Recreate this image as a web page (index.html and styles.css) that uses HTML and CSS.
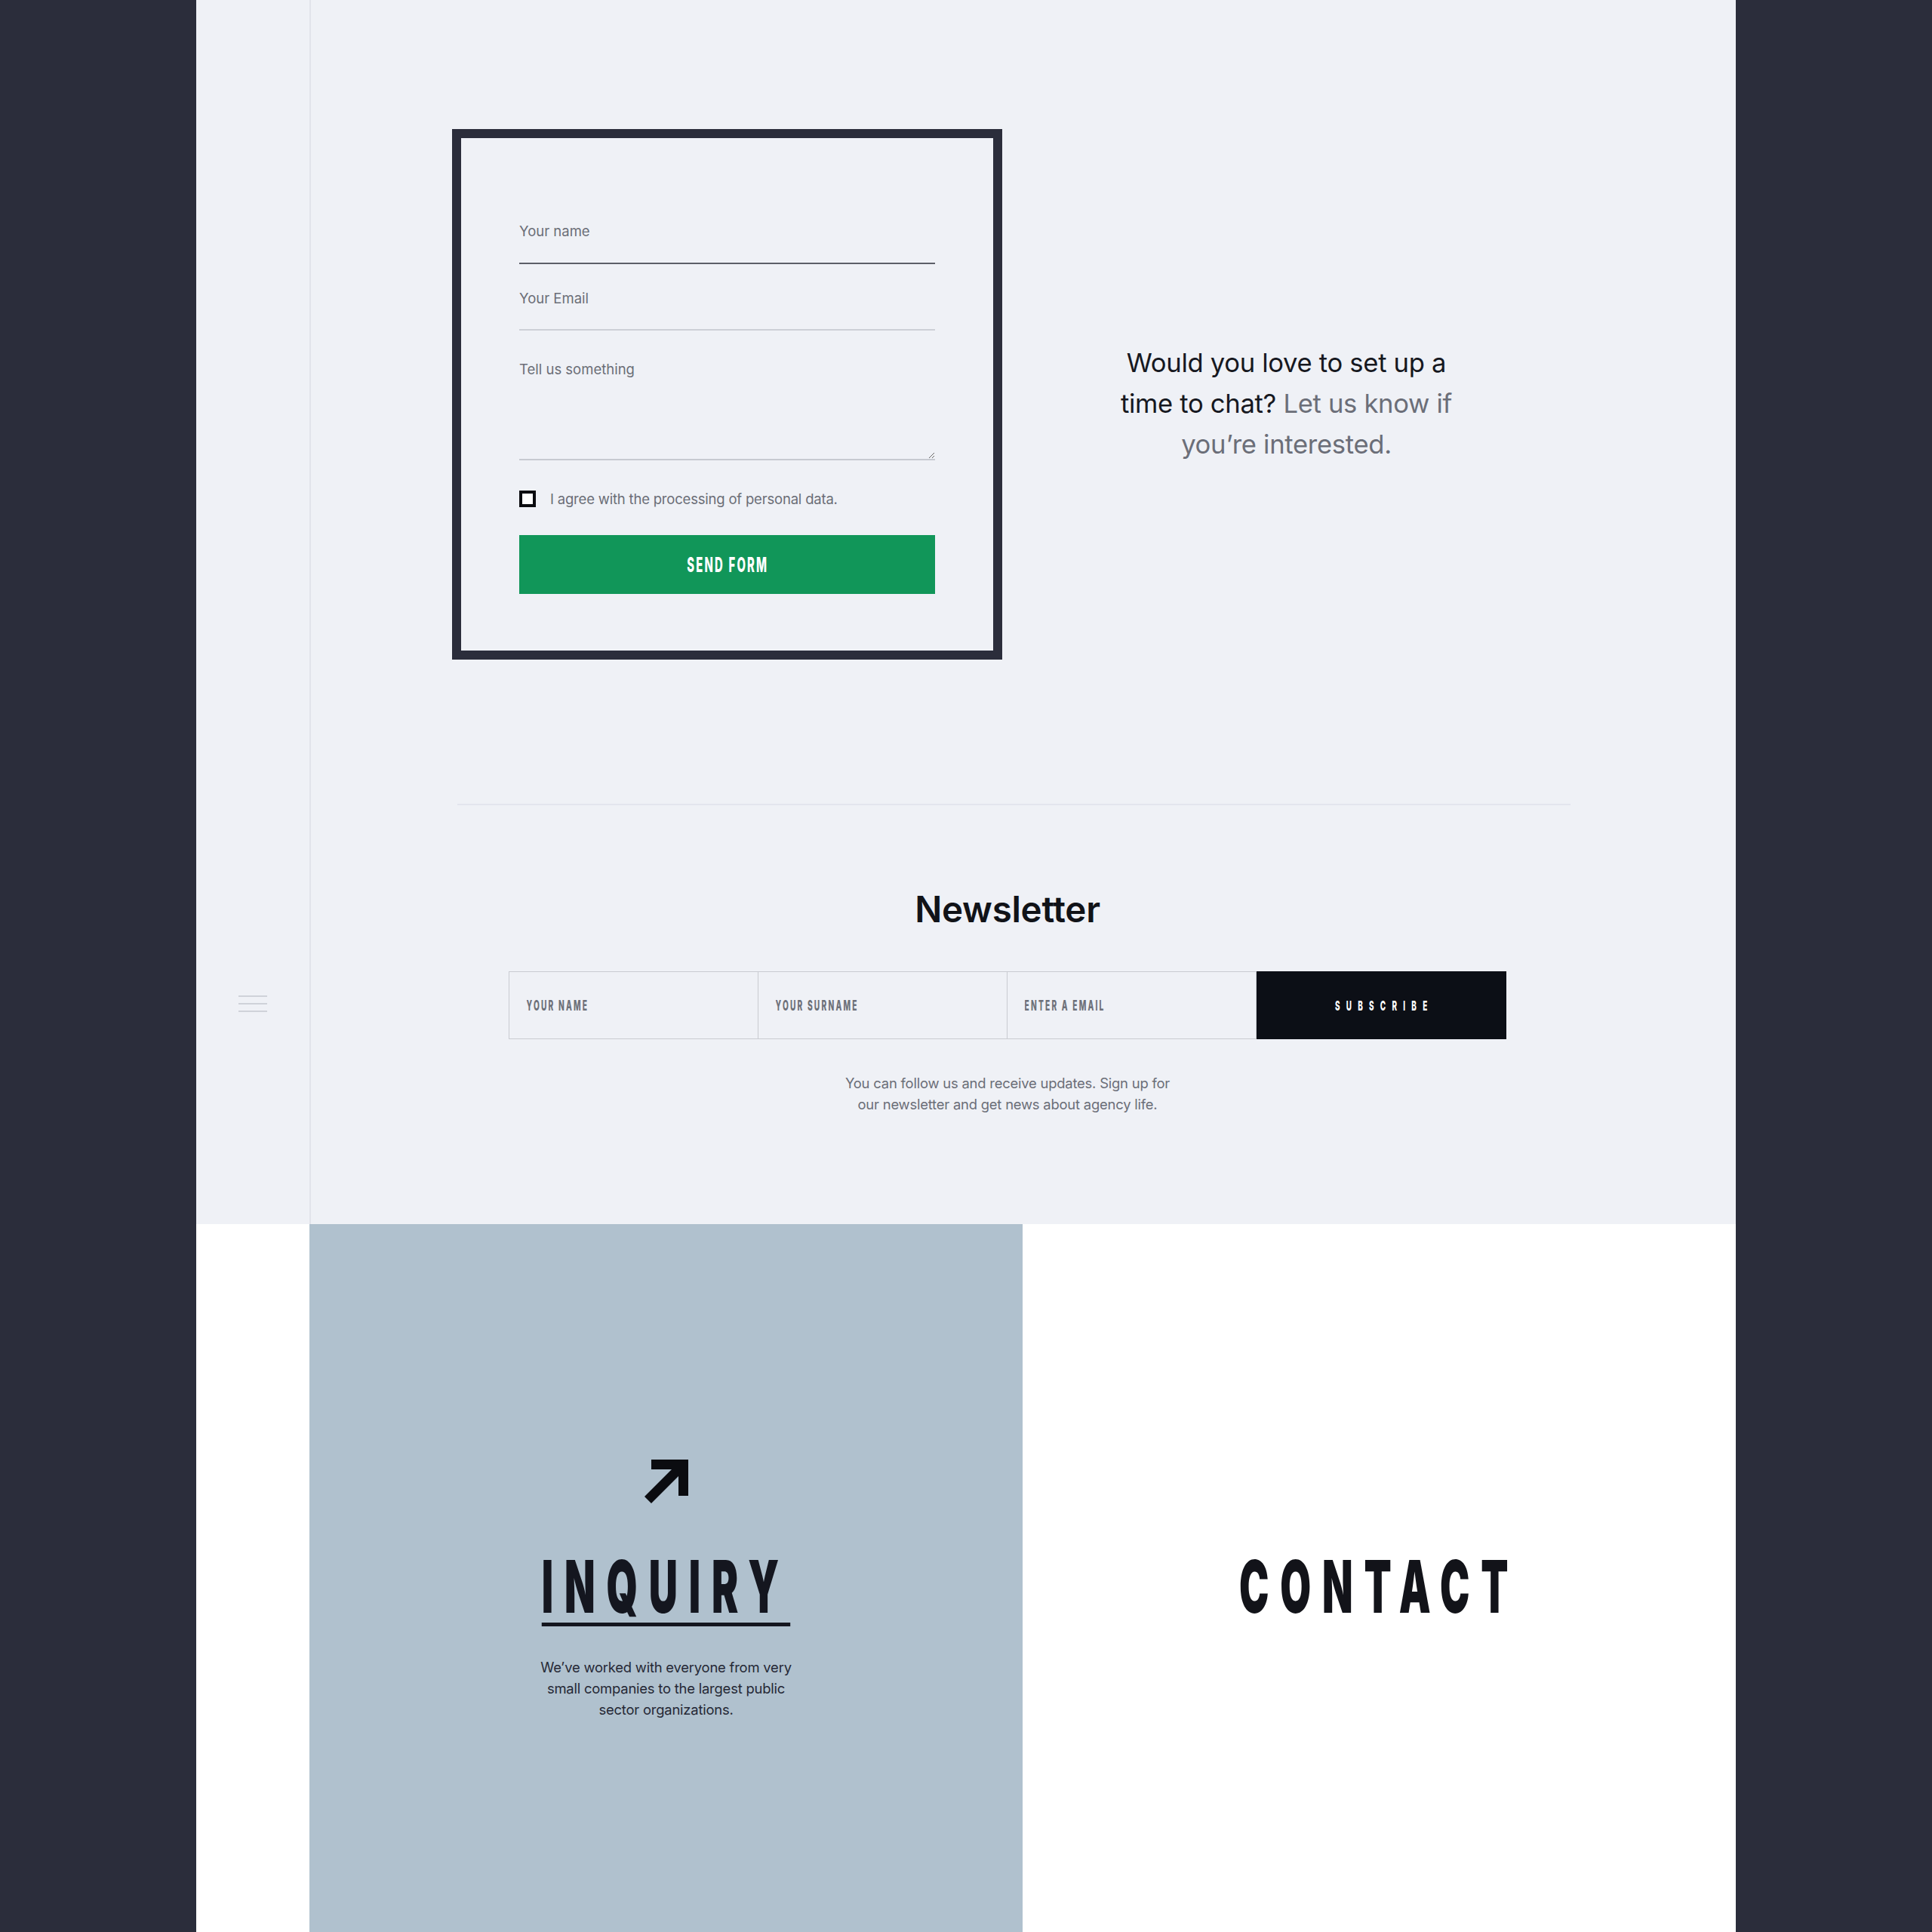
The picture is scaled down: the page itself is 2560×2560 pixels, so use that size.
FILE: index.html
```html
<!DOCTYPE html>
<html lang="en">
<head>
<meta charset="utf-8">
<title>Contact</title>
<link rel="stylesheet" href="styles.css">
</head>
<body>
<div class="page">
  <section class="top">
    <aside class="rail">
      <span class="burger"><i></i><i></i><i></i></span>
    </aside>
    <div class="main">
      <div class="container">
        <div class="contact-row">
          <form class="form-box">
            <input class="field field-active" type="text" placeholder="Your name">
            <input class="field field-2" type="email" placeholder="Your Email">
            <textarea class="area" placeholder="Tell us something"></textarea>
            <label class="agree"><input class="check" type="checkbox"><span>I agree with the processing of personal data.</span></label>
            <button class="send" type="button"><span class="cond send-label">Send Form</span></button>
          </form>
          <div class="pitch">
            <div class="pitch-text">
              <div class="strong">Would you love to set up a</div>
              <div><span class="strong">time to chat?</span> <span class="muted">Let us know if</span></div>
              <div class="muted">you’re interested.</div>
            </div>
          </div>
        </div>
        <hr class="divider">
        <div class="newsletter">
          <h2 class="nl-title">Newsletter</h2>
          <div class="nl-form">
            <div class="nl-cell"><input class="nl-input" type="text" placeholder="Your Name"></div>
            <div class="nl-cell"><input class="nl-input" type="text" placeholder="Your Surname"></div>
            <div class="nl-cell"><input class="nl-input" type="email" placeholder="Enter a Email"></div>
            <button class="nl-btn" type="button"><span class="cond nl-btn-label">Subscribe</span></button>
          </div>
          <p class="nl-note">You can follow us and receive updates. Sign up for<br>our newsletter and get news about agency life.</p>
        </div>
      </div>
    </div>
  </section>
  <section class="bottom">
    <div class="gap-col"></div>
    <div class="panel panel-inquiry">
      <svg class="arrow" viewBox="0 0 58 58" width="58" height="58"><path d="M9 0H58V48H45V22L9 58L0 49L36 13H9Z" fill="#0b0c10"/></svg>
      <h3 class="big big-underline">Inquiry</h3>
      <p class="panel-text">We’ve worked with everyone from very<br>small companies to the largest public<br>sector organizations.</p>
    </div>
    <div class="panel panel-contact">
      <h3 class="big">Contact</h3>
    </div>
  </section>
</div>
</body>
</html>
```
FILE: styles.css
```css
* { box-sizing: border-box; }
html, body { margin: 0; padding: 0; }
body {
  background: #2b2d3b;
  font-family: Inter, "Noto Sans", sans-serif;
  color: #15171f;
}
.page {
  width: 2040px;
  margin: 0 auto;
}
.top {
  display: flex;
  background: #eff1f6;
}
.rail {
  width: 152px;
  flex: none;
  border-right: 2px solid #e2e4eb;
  display: flex;
  justify-content: center;
  align-items: flex-start;
  padding-top: 1319px;
}
.burger {
  display: flex;
  flex-direction: column;
  gap: 8px;
  width: 38px;
}
.burger i {
  display: block;
  height: 2px;
  background: #cfd2d9;
}
.main { flex: 1; }
.container {
  margin-left: 187px;
  width: 1482px;
  padding-top: 171px;
  padding-bottom: 145px;
}
.contact-row {
  display: flex;
  align-items: center;
}
.form-box {
  width: 729px;
  flex: none;
  border: 12px solid #2b2d3b;
  padding: 81px 77px 75px;
  display: flex;
  flex-direction: column;
  margin: 0;
}
.field {
  height: 86px;
  border: 0;
  border-bottom: 2px solid #cdd0d7;
  background: transparent;
  font-family: Inter, sans-serif;
  font-size: 18.5px;
  color: #333;
  padding: 0;
  outline: none;
}
.field-2 { height: 88px; padding-top: 4px; }
.field-active { border-bottom-color: #5c5f68; }
.field::placeholder, .area::placeholder { color: #6b6e77; }
.area {
  margin-top: 12px;
  height: 160px;
  border: 0;
  border-bottom: 2px solid #c7cad1;
  background: transparent;
  font-family: Inter, sans-serif;
  font-size: 18.5px;
  line-height: 22px;
  padding: 28px 0 0;
  resize: vertical;
  outline: none;
}
.agree {
  margin-top: 40px;
  display: flex;
  align-items: center;
  gap: 19px;
  font-size: 18.5px;
  color: #6b6e77;
  height: 22px;
  letter-spacing: -0.2px;
}
.check {
  appearance: none;
  -webkit-appearance: none;
  margin: 0;
  width: 22px;
  height: 22px;
  border: 4px solid #0b0c10;
  background: #fff;
  flex: none;
}
.cond {
  display: inline-block;
  font-family: Inter, sans-serif;
  font-weight: 800;
  text-transform: uppercase;
  transform: scaleX(0.55);
}
.send {
  margin-top: 37px;
  height: 78px;
  border: 0;
  background: #119659;
  color: #fff;
  padding: 0;
}
.send-label {
  font-size: 27px;
  letter-spacing: 4px;
  padding-left: 4px;
}
.pitch {
  flex: 1;
  display: flex;
  justify-content: center;
  padding-top: 22px;
}
.pitch-text {
  width: 500px;
  text-align: center;
  font-size: 34.6px;
  line-height: 54px;
  letter-spacing: -0.3px;
}
.strong { color: #16181f; }
.muted { color: #6b6e78; }
.divider {
  margin: 191px 0 0 7px;
  border: 0;
  height: 2px;
  background: #e3e5ee;
}
.newsletter {
  display: flex;
  flex-direction: column;
  align-items: center;
  padding-top: 110px;
  margin-left: -10px;
}
.nl-title {
  margin: 0;
  font-size: 47.5px;
  line-height: 56px;
  font-weight: 600;
  color: #111318;
  letter-spacing: -0.3px;
}
.nl-form {
  margin-top: 54px;
  display: grid;
  grid-template-columns: repeat(4, 330px);
  height: 90px;
  border: 1px solid #c9cbd1;
}
.nl-cell {
  border-right: 1px solid #c9cbd1;
  overflow: hidden;
}
.nl-input {
  width: 182%;
  height: 100%;
  border: 0;
  background: transparent;
  padding: 0 0 0 41px;
  font-family: Inter, sans-serif;
  font-weight: 800;
  font-size: 18.5px;
  letter-spacing: 4px;
  text-transform: uppercase;
  transform: scaleX(0.55);
  transform-origin: left center;
  outline: none;
}
.nl-input::placeholder { color: #6d7079; }
.nl-btn {
  border: 0;
  background: #0c0f16;
  color: #fff;
  padding: 0;
  margin: -1px -1px -1px 0;
}
.nl-btn-label {
  font-size: 18px;
  letter-spacing: 15px;
  padding-left: 15px;
}
.nl-note {
  margin: 44px 0 0;
  text-align: center;
  font-size: 18.4px;
  line-height: 28px;
  color: #6b6e78;
  letter-spacing: -0.2px;
}
.bottom {
  display: flex;
  height: 960px;
  background: #fff;
}
.gap-col { width: 150px; flex: none; }
.panel {
  display: flex;
  flex-direction: column;
  align-items: center;
  justify-content: center;
}
.panel-inquiry {
  width: 945px;
  flex: none;
  background: #b0c1ce;
  padding-top: 8px;
}
.panel-contact { flex: 1; }
.arrow { display: block; }
.big {
  margin: 0;
  font-family: Inter, sans-serif;
  font-weight: 900;
  font-size: 96px;
  line-height: 1;
  letter-spacing: 27px;
  text-transform: uppercase;
  color: #121319;
  transform: scaleX(0.55);
}
.panel-inquiry .big {
  margin-top: 62px;
  color: #14161f;
}
.big-underline {
  border-bottom: 5px solid #14161f;
  padding-bottom: 0;
}
.panel-text {
  margin: 40px 0 0;
  text-align: center;
  font-size: 18.4px;
  line-height: 28px;
  color: #262936;
  letter-spacing: -0.2px;
}
```
